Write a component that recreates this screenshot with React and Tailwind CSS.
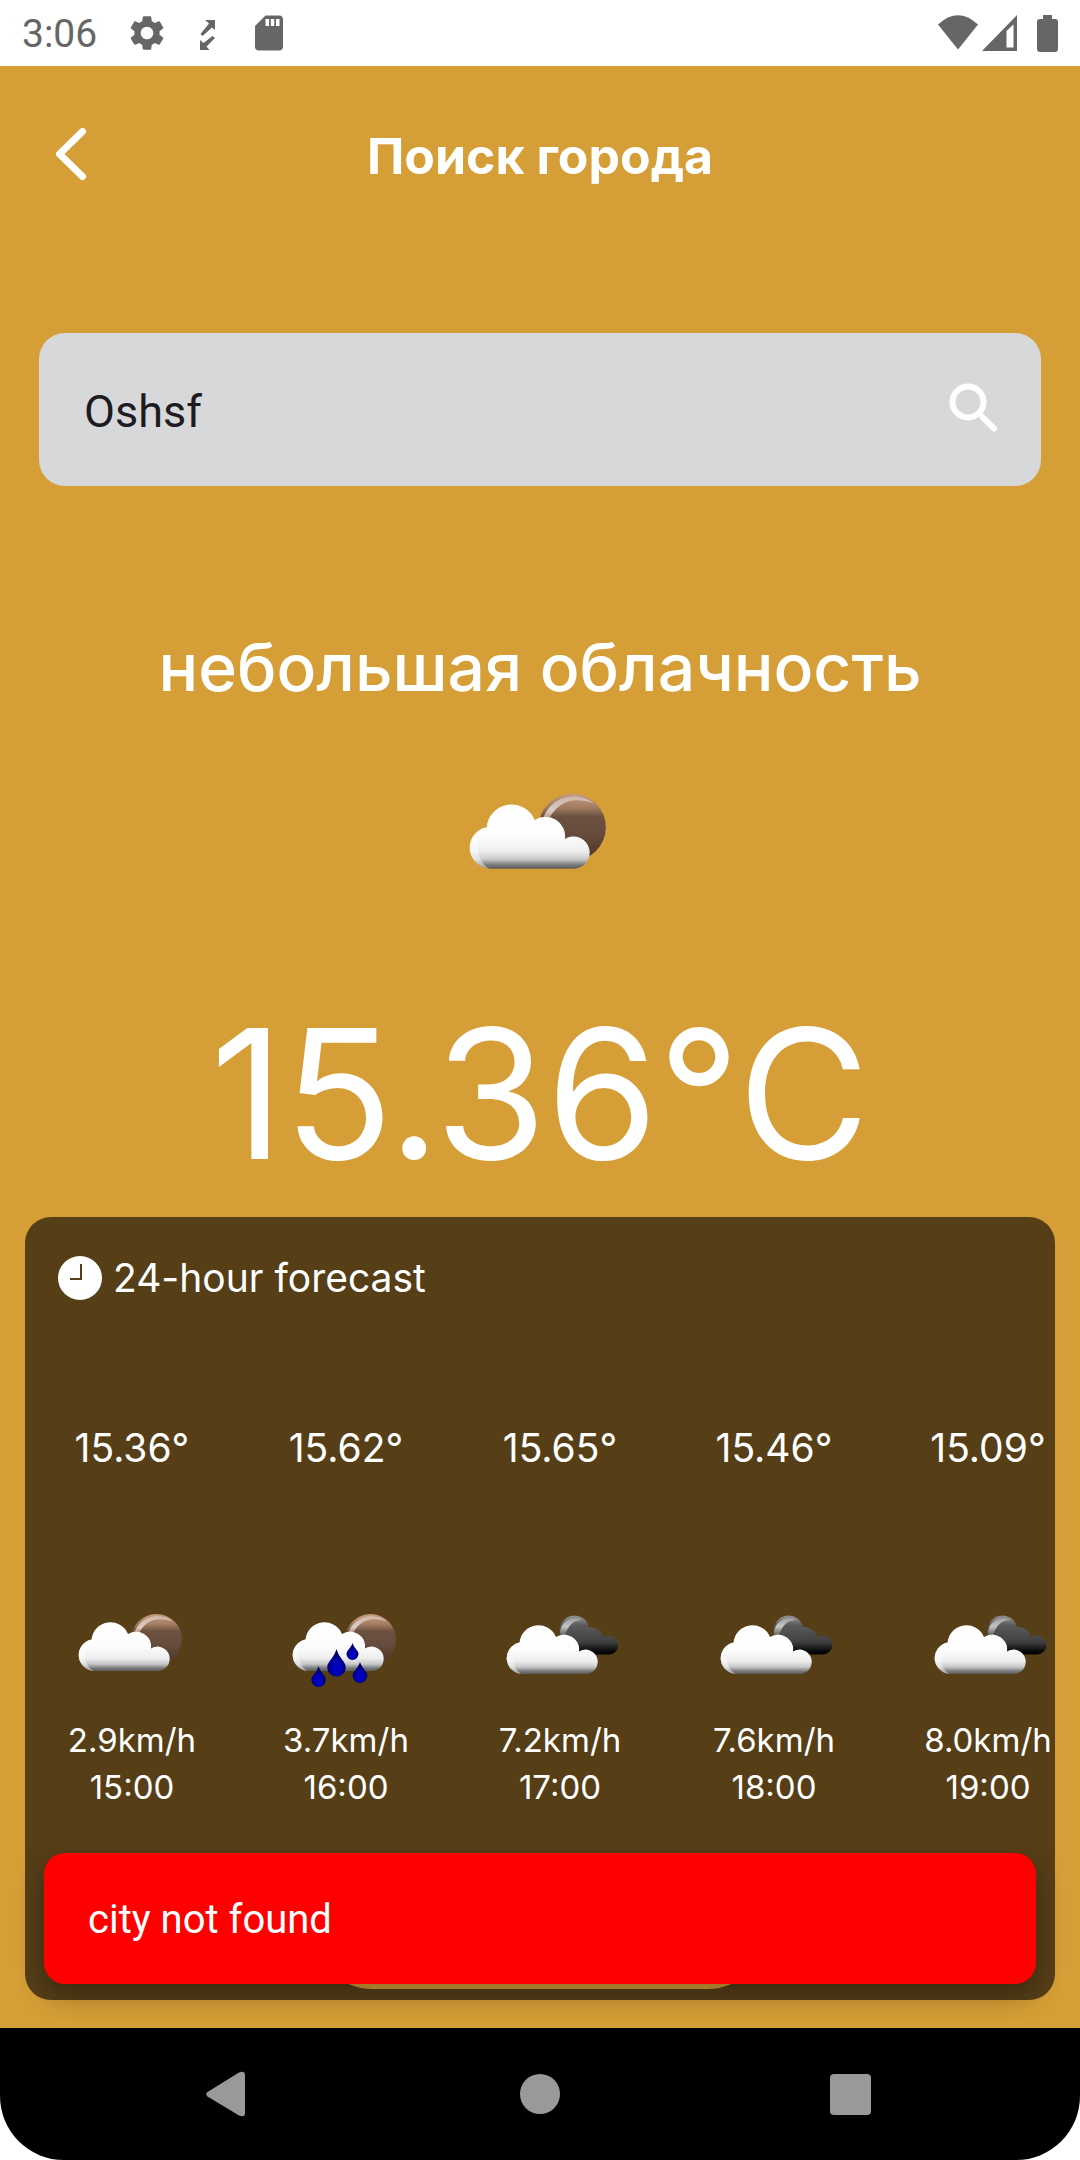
import React from "react";
import { MdSettings, MdSdCard } from "react-icons/md";

const HOURS = [
  { temp: "15.36°", icon: "sun", wind: "2.9km/h", time: "15:00" },
  { temp: "15.62°", icon: "rain", wind: "3.7km/h", time: "16:00" },
  { temp: "15.65°", icon: "clouds", wind: "7.2km/h", time: "17:00" },
  { temp: "15.46°", icon: "clouds", wind: "7.6km/h", time: "18:00" },
  { temp: "15.09°", icon: "clouds", wind: "8.0km/h", time: "19:00" },
];

function Drop({ x, top, bottom, r }) {
  const cy = bottom - r;
  const d = `M${x} ${top} C${x + r * 0.3} ${cy - r * 0.9} ${x + r} ${cy - r * 0.6} ${x + r} ${cy} A${r} ${r} 0 0 1 ${x - r} ${cy} C${x - r} ${cy - r * 0.6} ${x - r * 0.3} ${cy - r * 0.9} ${x} ${top} Z`;
  return <path d={d} fill="url(#drop)" />;
}

function WeatherIcon({ kind, className }) {
  return (
    <svg viewBox="0 0 120 100" className={className} aria-hidden="true">
      {kind === "clouds" ? (
        <g>
          <path
            d="M60 35 A15 15.500 0 0 1 89 27 A12.500 12.500 0 0 1 103 37.500 A9.500 9.500 0 1 1 108 54.500 L70 54.500 Z"
            fill="url(#dark)"
          />
          <path d="M60 35 A15 16 0 0 1 82 20 Q70 20 65 35 Z" fill="url(#darkEdge)" />
        </g>
      ) : (
        <g>
          <circle cx="84.500" cy="39.500" r="25.500" fill="url(#sun)" />
          <path d="M62 34 A24.500 24.500 0 0 1 101 21.500 Q76 13 66 35 Z" fill="url(#sunEdge)" />
        </g>
      )}
      <g transform={kind === "clouds" ? "translate(0 3)" : undefined}>
        <path
          d="M23 71 A15.900 15.900 0 0 1 19.500 39.500 A19 19 0 0 1 56 34 A15 15 0 0 1 79 48.500 A12.200 12.200 0 1 1 85.500 71 Z"
          fill="url(#cloud)"
        />
        <path
          d="M23 71 A15.900 15.900 0 0 1 19.500 39.500 A20 20 0 0 0 21 71 Z"
          fill="#ffffff"
          opacity="0.45"
        />
      </g>
      {kind === "rain" && (
        <g>
          <Drop x={50.5} top={49} bottom={76.5} r={9.3} />
          <Drop x={66.5} top={43} bottom={60} r={6} />
          <Drop x={32.6} top={66} bottom={87} r={7.2} />
          <Drop x={74} top={62} bottom={83} r={7.4} />
        </g>
      )}
    </svg>
  );
}

function IconPaints() {
  return (
    <svg className="absolute size-0" aria-hidden="true">
      <defs>
        <linearGradient id="cloud" gradientUnits="userSpaceOnUse" x1="0" y1="21" x2="0" y2="71">
          <stop offset="0" stopColor="#ffffff" />
          <stop offset="0.5" stopColor="#fdfdfd" />
          <stop offset="0.74" stopColor="#eeeeee" />
          <stop offset="0.86" stopColor="#c8c8c8" />
          <stop offset="0.94" stopColor="#7c7c7c" />
          <stop offset="1" stopColor="#5c5c5c" />
        </linearGradient>
        <linearGradient id="sun" x1="0" y1="0" x2="0" y2="1">
          <stop offset="0" stopColor="#c39c82" />
          <stop offset="0.2" stopColor="#a47d62" />
          <stop offset="0.34" stopColor="#6c5141" />
          <stop offset="0.6" stopColor="#664c3c" />
          <stop offset="1" stopColor="#4a3528" />
        </linearGradient>
        <linearGradient id="sunEdge" x1="0" y1="0" x2="0" y2="1">
          <stop offset="0" stopColor="#cdb5a8" />
          <stop offset="0.6" stopColor="#dccbc1" />
          <stop offset="1" stopColor="#9c7a66" />
        </linearGradient>
        <linearGradient id="dark" gradientUnits="userSpaceOnUse" x1="0" y1="18" x2="0" y2="55">
          <stop offset="0" stopColor="#8a8a8a" />
          <stop offset="0.2" stopColor="#5a5a5a" />
          <stop offset="0.65" stopColor="#404040" />
          <stop offset="0.9" stopColor="#080808" />
          <stop offset="1" stopColor="#000000" />
        </linearGradient>
        <linearGradient id="darkEdge" x1="0" y1="0" x2="0" y2="1">
          <stop offset="0" stopColor="#a0a0a0" />
          <stop offset="0.5" stopColor="#c4c4c4" />
          <stop offset="1" stopColor="#606060" />
        </linearGradient>
        <radialGradient id="drop" cx="0.5" cy="0.68" r="0.5">
          <stop offset="0" stopColor="#0000cc" />
          <stop offset="0.5" stopColor="#0000b4" />
          <stop offset="1" stopColor="#000066" />
        </radialGradient>
      </defs>
    </svg>
  );
}

function StatusBar() {
  return (
    <div className="flex h-[66px] items-center justify-between bg-white px-[22px] text-[#666666]">
      <div className="flex items-center">
        <span className="w-[104px] pt-[2px] text-[39px] leading-[44px]">3:06</span>
        <MdSettings className="size-[42px]" />
        <svg viewBox="0 0 42 42" className="ml-[19px] size-[42px]" fill="currentColor">
          <path d="M18 8 H28 V18 L25 15.500 L15.500 24 L13.500 22 L22 11.500 Z" />
          <path d="M25.500 24 L28 26 L19.500 34.500 L22.500 38 H13 V28 L16.500 31 Z" />
        </svg>
        <MdSdCard className="ml-[19px] size-[42px]" />
      </div>
      <svg viewBox="0 0 122 42" className="h-[42px] w-[122px]" fill="currentColor">
        <path d="M22 37.500 L2 12.500 Q22 -6 42 12.500 Z" />
        <path
          fillRule="evenodd"
          d="M81 3 V39 H46 Z M77.500 12.500 L70.500 19 V35.500 H77.500 Z"
        />
        <path d="M107 3 H116 V7 H119 Q122 7 122 10 V37 Q122 40 119 40 H104 Q101 40 101 37 V10 Q101 7 104 7 H107 Z" />
      </svg>
    </div>
  );
}

function SearchField() {
  return (
    <form
      className="mx-[39px] mt-[87px] flex h-[153px] items-center rounded-[26px] bg-[#d7d8da] pr-[37px] pl-[45px] font-['Roboto',sans-serif]"
      onSubmit={(e) => e.preventDefault()}
    >
      <input
        type="text"
        aria-label="Поиск города"
        defaultValue="Oshsf"
        className="min-w-0 flex-1 bg-transparent pt-1 text-[45px] leading-[56px] text-[#1d1b20] outline-none"
      />
      <button type="submit" aria-label="Поиск" className="text-white">
        <svg viewBox="0 0 63 63" className="size-[63px]" fill="none" stroke="currentColor">
          <circle cx="27" cy="24" r="15.500" strokeWidth="6" />
          <path d="M42 39.500 L53 50.500" strokeWidth="6" strokeLinecap="round" />
          <path d="M37 34 L43 40" strokeWidth="4" />
        </svg>
      </button>
    </form>
  );
}

function Forecast() {
  return (
    <section className="mx-[25px] mt-[13px] mb-7 flex flex-col overflow-hidden rounded-[26px] bg-[#563e17] pt-[39px] pb-[11px]">
      <h2 className="ml-[33px] flex items-center gap-[11px] text-[39px] leading-[44px]">
        <svg viewBox="0 0 44 44" className="size-[44px]" aria-hidden="true">
          <circle cx="22" cy="22" r="22" fill="#ffffff" />
          <path d="M23 8 V23 H12" fill="none" stroke="#563e17" strokeWidth="2" />
        </svg>
        24-hour forecast
      </h2>
      <ul className="mt-[124px] flex overflow-x-auto [scrollbar-width:none]">
        {HOURS.map((h) => (
          <li key={h.time} className="flex w-[214px] shrink-0 flex-col items-center">
            <span className="text-[39px] leading-[48px]">{h.temp}</span>
            <WeatherIcon kind={h.icon} className="mt-[128px] mb-[17px] h-[100px] w-[120px]" />
            <span className="text-[33px] leading-[47px]">{h.wind}</span>
            <span className="text-[33px] leading-[47px]">{h.time}</span>
          </li>
        ))}
      </ul>
      <div className="mt-[58px] h-[120px] w-[454px] self-center rounded-full bg-[#d59e36]" />
    </section>
  );
}

function NavBar() {
  return (
    <nav className="bg-white">
      <div className="flex h-[132px] items-center justify-center gap-[252px] rounded-b-[64px] bg-black text-[#999999]">
        <button type="button" aria-label="Back">
          <svg viewBox="0 0 60 60" className="size-[60px]" fill="currentColor">
            <path d="M9.500 28 L41 8.500 Q47 6 47 11 V49 Q47 54 41 51.500 L9.500 32.500 Q7 30.200 9.500 28 Z" />
          </svg>
        </button>
        <button type="button" aria-label="Home">
          <svg viewBox="0 0 60 60" className="size-[60px]" fill="currentColor">
            <circle cx="30" cy="30" r="20" />
          </svg>
        </button>
        <button type="button" aria-label="Recent apps">
          <svg viewBox="0 0 60 60" className="size-[60px]" fill="currentColor">
            <rect x="8" y="10" width="41" height="41" rx="4" />
          </svg>
        </button>
      </div>
    </nav>
  );
}

export default function App() {
  return (
    <div className="flex min-h-screen flex-col font-['Roboto',sans-serif]">
      <IconPaints />
      <StatusBar />
      <main className="relative flex flex-1 flex-col bg-[#d59e36] font-['Inter',sans-serif] text-white">
        <header className="grid h-[180px] grid-cols-[1fr_auto_1fr] items-center">
          <button type="button" aria-label="Back" className="ml-[40px] justify-self-start">
            <svg
              viewBox="0 0 60 60"
              className="size-[60px]"
              fill="none"
              stroke="currentColor"
              strokeWidth="7"
              strokeLinecap="round"
              strokeLinejoin="round"
            >
              <path d="M42.500 5.500 L19.500 28 L42.500 50.500" />
            </svg>
          </button>
          <h1 className="text-[50px] leading-[60px] font-bold">Поиск города</h1>
        </header>
        <SearchField />
        <p className="mt-[141px] text-center text-[66px] leading-[80px] font-medium">
          небольшая облачность
        </p>
        <WeatherIcon kind="sun" className="mt-[68px] h-[132px] w-[158px] self-center" />
        <p className="mt-[77px] text-center text-[180px] leading-[220px]">15.36°C</p>
        <Forecast />
        <div
          role="alert"
          className="absolute inset-x-[44px] bottom-[44px] flex h-[131px] items-center rounded-[21px] bg-[#ff0000] px-[44px] pt-[2px] font-['Roboto',sans-serif] text-[40px] leading-[52px] shadow-[0_12px_28px_rgba(0,0,0,0.3)]"
        >
          city not found
        </div>
      </main>
      <NavBar />
    </div>
  );
}
